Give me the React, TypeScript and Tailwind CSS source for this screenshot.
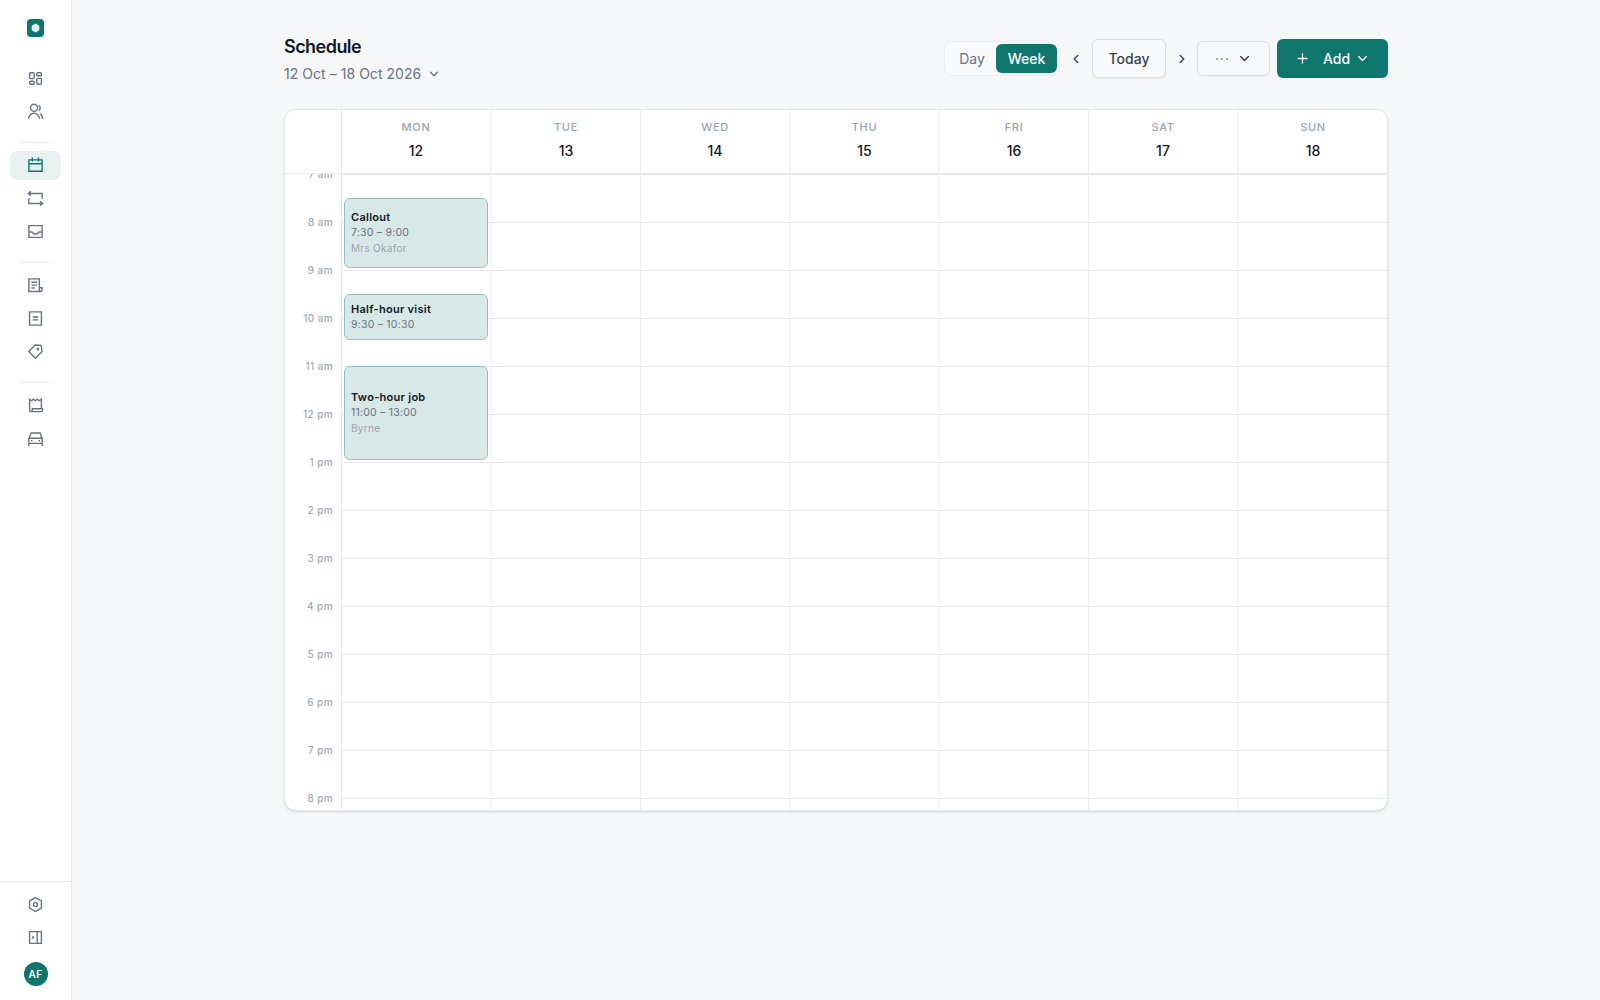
import type { ReactNode } from 'react';

type NavIcon = { name: string; active?: boolean; icon: ReactNode };

const navGroups: NavIcon[][] = [
  [
    {
      name: 'dashboard',
      icon: (
        <>
          <rect x="2.6" y="2.8" width="4.6" height="5.8" rx="0.9" />
          <rect x="2.6" y="11.2" width="4.6" height="3" rx="0.9" />
          <rect x="9.8" y="2.8" width="4.6" height="3" rx="0.9" />
          <rect x="9.8" y="8.4" width="4.6" height="5.8" rx="0.9" />
        </>
      ),
    },
    {
      name: 'clients',
      icon: (
        <>
          <circle cx="7" cy="4.7" r="3.5" />
          <path d="M1.6 15.7a5.4 5.4 0 0 1 10.8 0M11.8 2.3a3.4 3.4 0 0 1 0 5.5M13 10.9a5.4 5.4 0 0 1 2.6 4.8" />
        </>
      ),
    },
  ],
  [
    {
      name: 'schedule',
      active: true,
      icon: <path d="M1.9 2.9h13.2v11.4H1.9zM1.9 6.7h13.2M5.3.6v4M11.5.6v4" />,
    },
    {
      name: 'recurring',
      icon: (
        <>
          <path d="M2 3.5h13.2v5.2M1.9 8.3v5.2h13" />
          <path d="M4 1.4 1.3 3.5 4 5.6M13 11.4l2.7 2.1-2.7 2.1" />
        </>
      ),
    },
    {
      name: 'inbox',
      icon: <path d="M1.9 2.6h13.2v11.8H1.9zM1.9 9h3.2l1.7 2h3.4l1.7-2h3.2" />,
    },
  ],
  [
    {
      name: 'quotes',
      icon: (
        <>
          <path d="M12.3 10.7V1.9H1.9v12.6h11.8c.8 0 1.4-.6 1.4-1.4v-2.4h-2.8v2.4c0 .8.6 1.4 1.4 1.4" />
          <path d="M4.4 5.2h5.7M4.4 8.1h5.7M4.4 11h3.4" />
        </>
      ),
    },
    {
      name: 'invoices',
      icon: <path d="M2.6 1.9h11.8v13.2H2.6zM5.7 7h5.6M5.7 9.9h5.6" />,
    },
    {
      name: 'pricing',
      icon: (
        <>
          <path d="M1.8 8.6 8 2l6.2.5.9 5.9-6.7 6.9z" />
          <circle cx="10.9" cy="6.1" r="0.7" />
        </>
      ),
    },
  ],
  [
    {
      name: 'expenses',
      icon: (
        <path d="M14.4 11.5V2.2l-2 1.5-2-1.5-2 1.5-2-1.5-1.9 1.5-1.9-1.5v11c0 .8.6 1.4 1.4 1.4h10.3c.7 0 1.3-.6 1.3-1.3v-1.6H5.3v1.6c0 .7-.6 1.3-1.3 1.3" />
      ),
    },
    {
      name: 'vehicles',
      icon: (
        <path d="M2.2 7.9 4 3h9l1.8 4.9M1.8 16V8.2h13.4V16M1.8 13.4h13.4M3.9 10.8h1.6M11.5 10.8h1.6" />
      ),
    },
  ],
];

const footerIcons: NavIcon[] = [
  {
    name: 'settings',
    icon: (
      <>
        <path d="m8.5 1.6 5.9 3.4v7l-5.9 3.4L2.6 12V5z" />
        <circle cx="8.5" cy="8.5" r="2" />
      </>
    ),
  },
  {
    name: 'expand',
    icon: (
      <>
        <path d="M2.6 2.6h11.8v11.8H2.6zM10.2 2.6v11.8" />
        <path d="M5.4 6.7v3.6l1.8-1.8z" fill="currentColor" strokeWidth="0.4" />
      </>
    ),
  },
];

const THICK = 'border-r-2 border-[#f2f3f5]';
const THIN = 'border-r border-[#e7e9ed]';

const days = [
  { day: 'MON', date: 12, divider: THICK },
  { day: 'TUE', date: 13, divider: THIN },
  { day: 'WED', date: 14, divider: THICK },
  { day: 'THU', date: 15, divider: THICK },
  { day: 'FRI', date: 16, divider: THIN },
  { day: 'SAT', date: 17, divider: THICK },
  { day: 'SUN', date: 18, divider: '' },
];

const columns = 'grid flex-1 grid-cols-[150px_149px_150px_149px_149px_150px_1fr]';

const hours = [
  '7 am', '8 am', '9 am', '10 am', '11 am', '12 pm', '1 pm',
  '2 pm', '3 pm', '4 pm', '5 pm', '6 pm', '7 pm', '8 pm',
];

const HOUR_HEIGHT = 48;
const FIRST_HOUR = 7;

const events = [
  { title: 'Callout', time: '7:30 – 9:00', client: 'Mrs Okafor', start: 7.5, end: 9 },
  { title: 'Half-hour visit', time: '9:30 – 10:30', client: null, start: 9.5, end: 10.5 },
  { title: 'Two-hour job', time: '11:00 – 13:00', client: 'Byrne', start: 11, end: 13 },
];

const Chevron = ({ className }: { className: string }) => (
  <svg
    viewBox="0 0 10 10"
    className={className}
    fill="none"
    stroke="currentColor"
    strokeWidth="1.3"
    strokeLinecap="round"
    strokeLinejoin="round"
  >
    <path d="M1.5 3.2 5 6.8l3.5-3.6" />
  </svg>
);

const NavItem = ({ item }: { item: NavIcon }) => (
  <a
    className={
      item.active
        ? 'flex h-[29px] items-center justify-center rounded-lg bg-[#e7f1f0] text-[#0f766e]'
        : 'flex h-[29px] items-center justify-center rounded-lg text-[#6b7280]'
    }
  >
    <svg
      viewBox="0 0 17 17"
      className="size-[17px]"
      fill="none"
      stroke="currentColor"
      strokeWidth="1.4"
    >
      {item.icon}
    </svg>
  </a>
);

const Sidebar = () => (
  <aside className="flex w-[72px] shrink-0 flex-col border-r border-[#e5e7eb] bg-white">
    <div className="flex h-16 pt-[19px] pl-[27px]">
      <svg viewBox="0 0 18 18" className="h-[18px] w-[17px]" preserveAspectRatio="none">
        <rect width="18" height="18" rx="4" fill="#0f766e" />
        <path d="m9 4.5 4 2.2v4.6l-4 2.2-4-2.2V6.7z" fill="#e7f1f0" />
      </svg>
    </div>
    <nav className="flex-1 px-2.5">
      {navGroups.map((group, i) => (
        <div key={i}>
          {i > 0 && <div className="mx-2.5 mt-4 mb-2 h-px bg-[#e5e7eb]" />}
          <div className="flex flex-col gap-1">
            {group.map((item) => (
              <NavItem key={item.name} item={item} />
            ))}
          </div>
        </div>
      ))}
    </nav>
    <div className="flex h-[119px] flex-col gap-1 border-t border-[#e5e7eb] px-2.5 pt-2">
      {footerIcons.map((item) => (
        <NavItem key={item.name} item={item} />
      ))}
      <div className="mt-1.5 flex size-6 items-center justify-center self-center rounded-full bg-[#0f766e] text-[10px] font-semibold tracking-[0.04em] text-white">
        AF
      </div>
    </div>
  </aside>
);

const Toolbar = () => (
  <div className="flex h-[39px] items-center text-sm font-medium">
    <div className="flex h-[35px] w-[116px] items-center rounded-lg border border-[#eceef1] bg-[#f9fafb] p-0.5">
      <div className="flex-1 pl-px text-center font-normal text-[#6b7280]">Day</div>
      <div className="flex h-[29px] w-[61px] items-center justify-center rounded-md bg-[#0f766e] text-white">
        Week
      </div>
    </div>
    <Chevron className="ml-[11px] size-[10px] rotate-90 text-[#374151]" />
    <div className="ml-[11px] flex h-[39px] w-[74px] items-center justify-center rounded-md border border-[#dcdfe5] bg-[#f8f9fb] text-[#374151] shadow-xs">
      Today
    </div>
    <Chevron className="ml-[11px] size-[10px] -rotate-90 text-[#374151]" />
    <div className="ml-[10px] flex h-[35px] w-[73px] items-center justify-center gap-2.5 rounded-md border border-[#dcdfe5] bg-[#f7f8fa] pr-0.5 text-[#374151] shadow-xs">
      <svg viewBox="0 0 14 4" className="h-1 w-3.5" fill="currentColor">
        <circle cx="2" cy="2" r="0.8" />
        <circle cx="7" cy="2" r="0.8" />
        <circle cx="12" cy="2" r="0.8" />
      </svg>
      <Chevron className="size-[11px]" />
    </div>
    <div className="ml-[7px] flex h-[39px] w-[111px] items-center rounded-md bg-[#0f766e] pl-5 text-white">
      <svg
        viewBox="0 0 11 11"
        className="size-[11px]"
        stroke="currentColor"
        strokeWidth="1.3"
        strokeLinecap="round"
      >
        <path d="M5.5 1v9M1 5.5h9" />
      </svg>
      <span className="ml-[15px]">Add</span>
      <Chevron className="ml-[7px] size-[11px]" />
    </div>
  </div>
);

const Calendar = () => (
  <div className="mt-[31px] flex h-[702px] flex-col overflow-hidden rounded-xl border border-[#e5e7eb] bg-white shadow-sm">
    <div className="flex h-16 shrink-0 border-b border-[#e5e7eb]">
      <div className="w-[57px] shrink-0 border-r border-[#e5e7eb]" />
      <div className={columns}>
        {days.map(({ day, date, divider }) => (
          <div key={day} className={`${divider} pt-[9px] text-center`}>
            <div className="text-[11px] leading-4 font-medium tracking-[0.06em] text-[#9ca3af]">
              {day}
            </div>
            <div className="mt-1.5 text-sm leading-5 font-medium text-[#111827]">{date}</div>
          </div>
        ))}
      </div>
    </div>
    <div className="flex min-h-0 flex-1 overflow-hidden">
      <div className="w-[57px] shrink-0 border-r border-[#e5e7eb]">
        {hours.map((hour) => (
          <div key={hour} className="h-12 pr-2 text-right">
            <div className="-translate-y-2 text-[10px] leading-[17px] font-medium tracking-[0.04em] text-[#a3a9b4]">
              {hour}
            </div>
          </div>
        ))}
      </div>
      <div className={columns}>
        {days.map(({ day, divider }, i) => (
          <div key={day} className={`${divider} relative`}>
            {hours.map((hour) => (
              <div key={hour} className="h-12 border-t border-[#e5e7eb]" />
            ))}
            {i === 0 &&
              events.map((event) => (
                <div
                  key={event.title}
                  className="absolute right-0.5 left-0.5 flex flex-col justify-center rounded-md border border-[#8fc3bd] bg-[#d8e8e6] px-1.5 text-[11px] leading-[15.5px] tracking-[0.02em]"
                  style={{
                    top: (event.start - FIRST_HOUR) * HOUR_HEIGHT,
                    height: (event.end - event.start) * HOUR_HEIGHT - 2,
                  }}
                >
                  <div className="font-semibold tracking-[0.025em] text-[#111827]">
                    {event.title}
                  </div>
                  <div className="text-[10.5px] text-[#6b7280]">{event.time}</div>
                  {event.client && (
                    <div className="text-[10px] tracking-[0.03em] text-[#9ca3af]">
                      {event.client}
                    </div>
                  )}
                </div>
              ))}
          </div>
        ))}
      </div>
    </div>
  </div>
);

const App = () => (
  <div className="flex h-[1000px] w-[1600px] overflow-hidden bg-[#f5f7f9] font-['Inter',sans-serif]">
    <Sidebar />
    <main className="flex-1 pt-[39px]">
      <div className="mx-auto w-[1104px]">
        <header className="flex h-[39px] justify-between">
          <div>
            <h1 className="-mt-1.5 text-lg leading-7 font-semibold tracking-[-0.03em] text-[#111827]">
              Schedule
            </h1>
            <div className="mt-[3px] flex items-center gap-2 text-sm leading-5 tracking-[0.003em] text-[#6b7280]">
              12 Oct – 18 Oct 2026
              <Chevron className="size-[10px]" />
            </div>
          </div>
          <Toolbar />
        </header>
        <Calendar />
      </div>
    </main>
  </div>
);

export default App;
